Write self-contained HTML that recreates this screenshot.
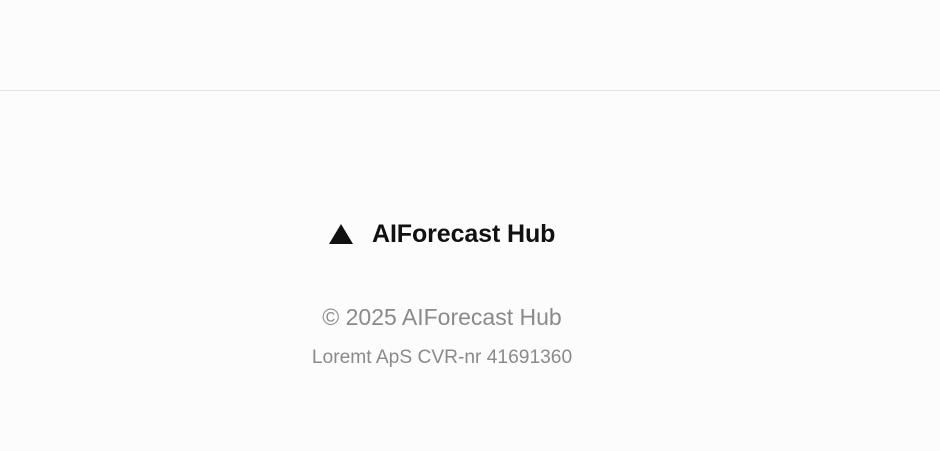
<!DOCTYPE html>
<html><head><style>
html,body{margin:0;padding:0;background:#fcfcfc;width:940px;height:451px;overflow:hidden;font-family:"Liberation Sans",sans-serif;}
.line{position:absolute;left:0;top:90px;width:940px;height:1px;background:#e2e2e2;}
.tri{position:absolute;left:329px;top:224px;width:0;height:0;border-left:12px solid transparent;border-right:12px solid transparent;border-bottom:20px solid #111;}
.title{position:absolute;left:372px;top:220px;font-size:25px;font-weight:bold;color:#111;white-space:nowrap;letter-spacing:-0.1px;}
.c{position:absolute;left:0;width:884px;text-align:center;color:#8a8a8a;white-space:nowrap;}
.c1{top:304px;font-size:23px;}
.c2{top:347px;font-size:19.2px;}
</style></head><body>
<div class="line"></div>
<div class="tri"></div>
<div class="title">AIForecast Hub</div>
<div class="c c1">© 2025 AIForecast Hub</div>
<div class="c c2">Loremt ApS CVR-nr 41691360</div>
</body></html>
